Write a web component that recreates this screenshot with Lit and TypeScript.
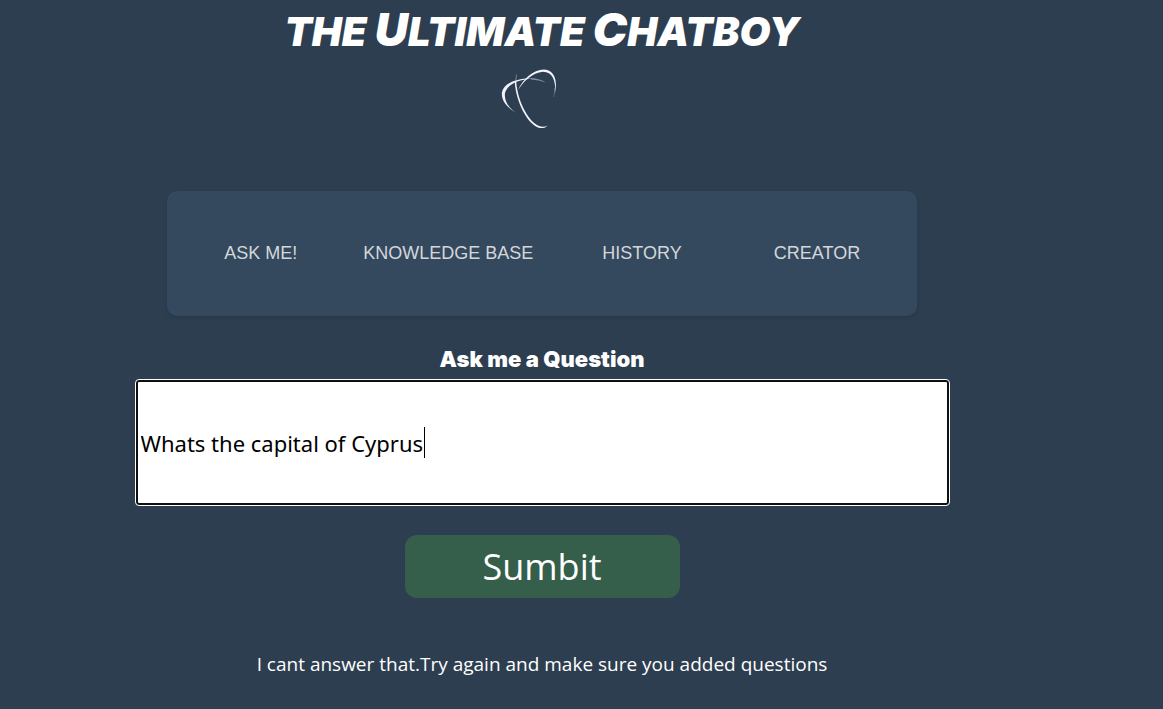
import { LitElement, html, css } from "lit";
import { customElement, state, query } from "lit/decorators.js";

@customElement("orbit-logo")
class OrbitLogo extends LitElement {
  static styles = css`
    :host { display: block; }
    .logo { display: block; width: 60px; height: 64px; fill: #f1f2fb; }
    .faint { opacity: 0.45; }
  `;
  render() {
    return html`<svg class="logo" viewBox="0 0 60 64" aria-hidden="true">
      <path d="M15 46 C5 40 1 33 2 26 C4 17 17 12 32 12.500 C17 14 7 19 5 27 C4 34 8 41 15 46Z" />
      <path class="faint" d="M31 12 Q40 12.500 46 16.500 Q39 13.800 31 13.500Z M8 39 Q11 44 17 47 Q11 45 8 39Z" />
      <path d="M18 24 C23 13 33 4 44 3.500 C54 4 58 14 55 27 C56 14 52 6 43 5.800 C32 7 24 15 18 24Z" />
      <path class="faint" d="M55.300 22 L54 31 L53.600 31 L54.500 22Z M16 8.500 L15 18 L16 18 L16.800 8.500Z" />
      <path d="M14.800 15 C15 31 25 56 38 61.500 C42 62.800 46 61.800 47.500 59.500 C45 61 42 61 39 60 C27 55 17 32 16.200 15Z" />
    </svg>`;
  }
}

@customElement("app-root")
class AppRoot extends LitElement {
  static styles = css`
    :host {
      display: block;
      min-height: 100vh;
      box-sizing: border-box;
      padding-right: 79px;
      background: #2d3e50;
      color: #fff;
      font-family: "Open Sans", sans-serif;
    }
    .page { display: flex; flex-direction: column; align-items: center; }
    .title {
      margin: 0;
      font: italic 900 40px/58px "Inter", sans-serif;
      text-align: center;
      text-transform: uppercase;
    }
    .initial { font-size: 46px; }
    .logo { margin: 5px 24px 0 0; }
    .nav {
      box-sizing: border-box;
      display: grid;
      grid-template-columns: 15fr 15fr 16fr 12fr;
      align-items: center;
      justify-items: center;
      width: 750px;
      max-width: 100%;
      min-height: 125px;
      margin-top: 61px;
      padding: 0 25px 2px 0;
      border-radius: 10px;
      background: #34495e;
      box-shadow: 0 2px 4px rgba(0, 0, 0, 0.1);
    }
    .link {
      color: #d3d7db;
      font: 18px/24px "Liberation Sans", sans-serif;
      text-decoration: none;
      text-transform: uppercase;
    }
    .form { display: flex; flex-direction: column; align-items: center; width: 100%; margin-top: 27px; }
    .label { font: 900 22px/32px "Inter", sans-serif; }
    .field { position: relative; width: 75%; margin-top: 5px; }
    .question {
      box-sizing: border-box;
      display: block;
      width: 100%;
      height: 125px;
      padding: 0 3px;
      border: 2px solid #101010;
      border-radius: 3px;
      outline: 1px solid #fff;
      background: #fff;
      color: #000;
      caret-color: transparent;
      font: 22px/32px "Noto Sans", sans-serif;
    }
    .caret {
      position: absolute;
      top: 47px;
      width: 1px;
      height: 31px;
      background: #000;
      pointer-events: none;
    }
    .submit {
      width: 275px;
      height: 63px;
      margin-top: 30px;
      padding: 0;
      border: 0;
      border-radius: 12px;
      background: #355e4b;
      color: #fff;
      font: 36px/56px "Open Sans", sans-serif;
    }
    .answer { margin: 50px 0 0; font-size: 19px; line-height: 32px; }
  `;

  @state() private question = "Whats the capital of Cyprus";
  @state() private answer = "I cant answer that.Try again and make sure you added questions";
  @state() private caretX = 5;
  @query(".question") private field!: HTMLInputElement;

  firstUpdated() {
    this.field.focus();
    this.field.setSelectionRange(this.question.length, this.question.length);
    this.placeCaret();
  }

  private placeCaret() {
    const pen = document.createElement("canvas").getContext("2d")!;
    pen.font = getComputedStyle(this.field).font;
    const typed = this.question.slice(0, this.field.selectionStart ?? this.question.length);
    this.caretX = 5 + Math.round(pen.measureText(typed).width);
  }

  private onInput(e: Event) {
    this.question = (e.target as HTMLInputElement).value;
    this.placeCaret();
  }

  render() {
    return html`<main class="page">
      <h1 class="title">the <span class="initial">U</span>ltimate <span class="initial">C</span>hatboy</h1>
      <orbit-logo class="logo"></orbit-logo>
      <nav class="nav">
        ${["Ask me!", "Knowledge base", "History", "Creator"].map(
          (name) => html`<a class="link" href="#">${name}</a>`
        )}
      </nav>
      <form class="form" @submit=${(e: Event) => e.preventDefault()}>
        <label class="label" for="question">Ask me a Question</label>
        <div class="field">
          <input class="question" id="question" type="text" autocomplete="off" spellcheck="false"
            .value=${this.question} @input=${this.onInput} @keyup=${this.placeCaret} @click=${this.placeCaret} />
          <span class="caret" style="left: ${this.caretX}px"></span>
        </div>
        <button class="submit" type="submit">Sumbit</button>
      </form>
      <p class="answer">${this.answer}</p>
    </main>`;
  }
}
